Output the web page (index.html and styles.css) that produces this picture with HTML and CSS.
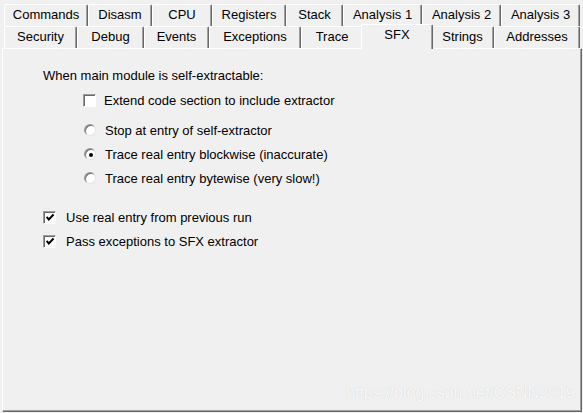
FILE: index.html
```html
<!DOCTYPE html>
<html>
<head>
<meta charset="utf-8">
<link rel="stylesheet" href="styles.css">
</head>
<body>
<div class="tabs">
  <div class="row">
    <div class="tab w84">Commands</div>
    <div class="tab w64">Disasm</div>
    <div class="tab w60">CPU</div>
    <div class="tab w74">Registers</div>
    <div class="tab w57">Stack</div>
    <div class="tab w79">Analysis 1</div>
    <div class="tab w79">Analysis 2</div>
    <div class="tab w79">Analysis 3</div>
  </div>
  <div class="row">
    <div class="tab w73">Security</div>
    <div class="tab w67">Debug</div>
    <div class="tab w65">Events</div>
    <div class="tab w92">Exceptions</div>
    <div class="tab w62">Trace</div>
    <div class="tab active">SFX</div>
    <div class="tab w63">Strings</div>
    <div class="tab w86">Addresses</div>
  </div>
</div>
<div class="panel">
  <div class="heading">When main module is self-extractable:</div>
  <div class="sub">
    <label class="opt">
      <span class="box"></span>
      <span>Extend code section to include extractor</span>
    </label>
    <div class="radios">
      <label class="opt">
        <span class="radio"></span>
        <span>Stop at entry of self-extractor</span>
      </label>
      <label class="opt">
        <span class="radio"><span class="dot"></span></span>
        <span>Trace real entry blockwise (inaccurate)</span>
      </label>
      <label class="opt">
        <span class="radio"></span>
        <span>Trace real entry bytewise (very slow!)</span>
      </label>
    </div>
  </div>
  <div class="checks">
    <label class="opt wide">
      <span class="box"><svg width="11" height="11" viewBox="0 0 11 11"><path d="M1.8 4.8 L4.2 7.6 L9.4 2.2" fill="none" stroke="#000" stroke-width="2.2"/></svg></span>
      <span>Use real entry from previous run</span>
    </label>
    <label class="opt wide">
      <span class="box"><svg width="11" height="11" viewBox="0 0 11 11"><path d="M1.8 4.8 L4.2 7.6 L9.4 2.2" fill="none" stroke="#000" stroke-width="2.2"/></svg></span>
      <span>Pass exceptions to SFX extractor</span>
    </label>
  </div>
</div>
<div class="watermark">https://blog.csdn.net/CSNN2019</div>
</body>
</html>
```
FILE: styles.css
```css
html, body {
  margin: 0;
  padding: 0;
  background: #f0f0f0;
  overflow: hidden;
}
body {
  width: 583px;
  height: 413px;
  font-family: "Liberation Sans", Arial, sans-serif;
  font-size: 13px;
  color: #000;
  position: relative;
}
.tabs {
  padding: 4px 0 0 4px;
}
.row {
  display: flex;
  height: 22px;
}
.tab {
  box-sizing: border-box;
  height: 22px;
  flex: none;
  border-top: 1px solid #fff;
  border-left: 1px solid #fff;
  border-right: 1px solid #696969;
  box-shadow: inset -1px 0 #a0a0a0;
  border-radius: 2px 2px 0 0;
  line-height: 20px;
  text-align: center;
  white-space: nowrap;
  background: #f0f0f0;
}
.tab.active {
  width: 72px;
  height: 25px;
  margin: -2px -2px 0 -2px;
  position: relative;
  z-index: 1;
}
.w57 { width: 57px; }
.w60 { width: 60px; }
.w62 { width: 62px; }
.w63 { width: 63px; }
.w64 { width: 64px; }
.w65 { width: 65px; }
.w67 { width: 67px; }
.w73 { width: 73px; }
.w74 { width: 74px; }
.w79 { width: 79px; }
.w84 { width: 84px; }
.w86 { width: 86px; }
.w92 { width: 92px; }

.panel {
  box-sizing: border-box;
  margin-left: 2px;
  width: 580px;
  height: 364px;
  border: 1px solid;
  border-color: #fff #696969 #696969 #fff;
  box-shadow: inset -1px -1px #a0a0a0;
  padding: 19px 0 0 40px;
  display: flex;
  flex-direction: column;
}
.heading {
  line-height: 15px;
}
.sub {
  margin: 7px 0 0 40px;
  display: flex;
  flex-direction: column;
}
.radios {
  margin-top: 10px;
  display: flex;
  flex-direction: column;
  gap: 4px;
}
.checks {
  margin-top: 19px;
  display: flex;
  flex-direction: column;
  gap: 4px;
}
.opt {
  display: flex;
  align-items: center;
  height: 20px;
  gap: 8px;
}
.opt.wide {
  gap: 10px;
}
.box {
  box-sizing: border-box;
  width: 13px;
  height: 13px;
  flex: none;
  background: #fff;
  border: 1px solid;
  border-color: #9a9a9a #fff #fff #9a9a9a;
  box-shadow: inset 1px 1px #6a6a6a;
  display: flex;
  align-items: center;
  justify-content: center;
}
.box svg {
  display: block;
  margin: 1px 0 0 1px;
}
.radio {
  box-sizing: border-box;
  width: 12px;
  height: 12px;
  flex: none;
  margin: 0 1px 0 1px;
  border-radius: 50%;
  background: #fff;
  border: 1px solid;
  border-color: #9a9a9a #e4e4e4 #e4e4e4 #9a9a9a;
  box-shadow: inset 1px 1px #6a6a6a;
  display: flex;
  align-items: center;
  justify-content: center;
}
.dot {
  width: 4px;
  height: 4px;
  border-radius: 50%;
  background: #000;
  margin: 1px 0 0 1px;
}
.watermark {
  position: absolute;
  left: 346px;
  top: 384px;
  font-size: 16px;
  line-height: 18px;
  color: rgba(255, 255, 255, 0.9);
  text-shadow: 0 0 1px rgba(0, 0, 0, 0.18);
  white-space: nowrap;
}
```
